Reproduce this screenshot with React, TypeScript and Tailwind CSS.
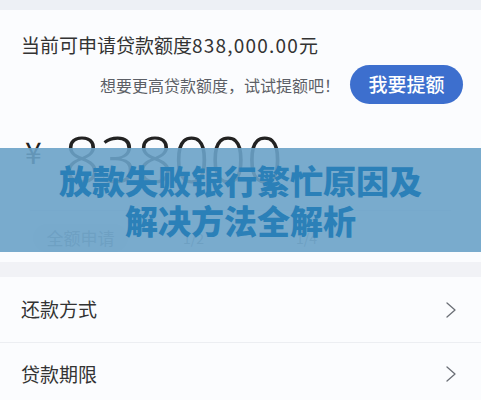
import React from 'react';

const cjk = { fontFamily: '"Noto Sans CJK SC", "Noto Sans", sans-serif' };

const Chevron: React.FC = () => (
  <svg width="12" height="18" viewBox="0 0 12 18" fill="none">
    <path d="M2 2l8 7-8 7" stroke="#6b6f76" strokeWidth="1.3" strokeLinecap="round" strokeLinejoin="round" />
  </svg>
);

const App: React.FC = () => {
  return (
    <div className="relative w-[481px] h-[400px] overflow-hidden bg-[#f3f4f8]" style={cjk}>
      <div className="h-[10px] bg-[#edf0f5]" />

      {/* quota card */}
      <div className="bg-[#fbfcfe] pt-[22px] pb-[10px]">
        <div className="px-[21px] text-[19px] leading-[26px] text-[#333]">
          当前可申请贷款额度<span className="tracking-[1.2px]">838,000.00</span>元
        </div>
        <div className="mt-[7px] flex items-center justify-end gap-[10px] pr-[18px]">
          <span className="text-[16px] text-[#5c5f66]">想要更高贷款额度，试试提额吧！</span>
          <button className="h-[39px] w-[113px] rounded-full bg-[#3d6fce] text-[19px] font-medium text-white">
            我要提额
          </button>
        </div>
        <div className="mt-[23px] flex items-start px-[25px] text-[#222]">
          <span className="mt-[9px] text-[30px] leading-none">¥</span>
          <span
            className="ml-[22px] h-[64px] text-[64px] font-light leading-none"
            style={{ fontFamily: '"Noto Sans", sans-serif' }}
          >
            838000
          </span>
        </div>
        <div className="mx-[30px] mt-[19px] h-px bg-[#e6e8ee]" />
        <div className="mt-[13px] flex items-center px-[33px] text-[#8a8d93]">
          <div className="flex h-[28px] w-[95px] items-center justify-center rounded-full bg-[#eef0f4] text-[17px]">全额申请</div>
          <span className="ml-[55px] text-[14px]">1/2</span>
          <span className="ml-[92px] text-[14px]">1/4</span>
        </div>
      </div>

      <div className="h-[15px] bg-[#f1f2f6]" />

      {/* settings list */}
      <div className="bg-[#fbfcfe]">
        <div className="flex h-[65px] items-center justify-between pl-[21px] pr-[24px]">
          <span className="text-[19px] text-[#333]">还款方式</span>
          <Chevron />
        </div>
        <div className="h-px bg-[#eceef2]" />
        <div className="flex h-[62px] items-center justify-between pl-[21px] pr-[24px]">
          <span className="text-[19px] text-[#333]">贷款期限</span>
          <Chevron />
        </div>
      </div>

      {/* title overlay band */}
      <div className="absolute left-0 right-0 top-[148px] flex h-[104px] flex-col items-center justify-center bg-[#6aa2c8]/90">
        <div className="text-[33px] font-black leading-[40px] text-[#2b80b8]">放款失败银行繁忙原因及</div>
        <div className="text-[33px] font-black leading-[40px] text-[#2b80b8]">解决方法全解析</div>
      </div>
    </div>
  );
};

export default App;
